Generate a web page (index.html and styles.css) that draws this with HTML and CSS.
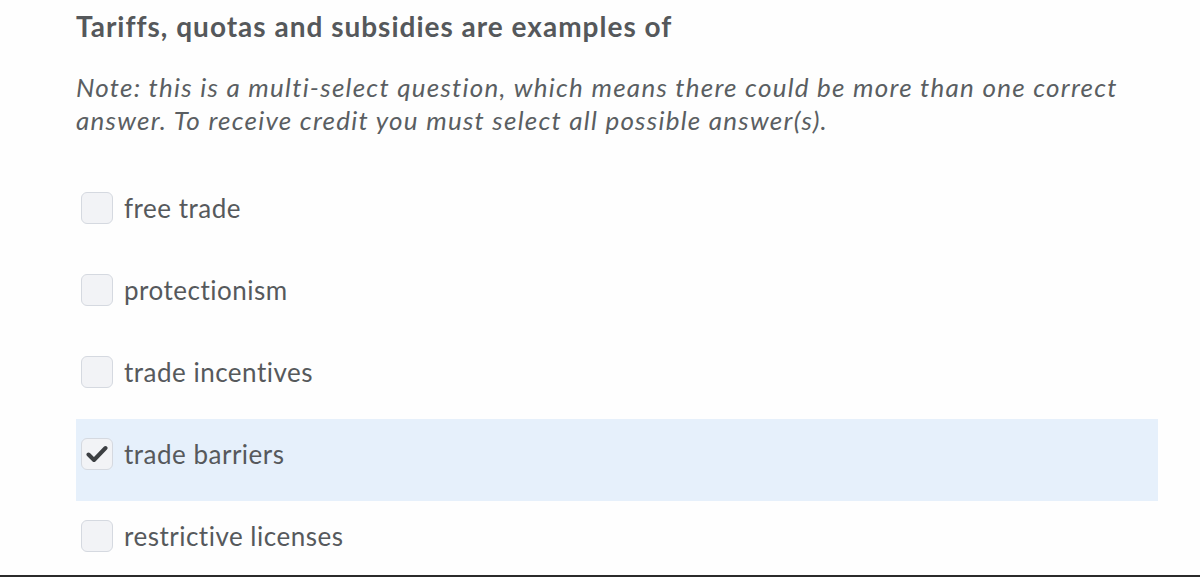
FILE: index.html
```html
<!DOCTYPE html>
<html>
<head>
<meta charset="utf-8">
<link rel="stylesheet" href="styles.css">
</head>
<body>
<div class="page">
  <h1 class="title">Tariffs, quotas and subsidies are examples of</h1>
  <p class="note">Note: this is a multi-select question, which means there could be more than one correct answer. To receive credit you must select all possible answer(s).</p>
  <div class="options">
    <label class="option"><span class="box"></span><span class="label">free trade</span></label>
    <label class="option"><span class="box"></span><span class="label">protectionism</span></label>
    <label class="option"><span class="box"></span><span class="label">trade incentives</span></label>
    <label class="option selected"><span class="box"><svg width="22" height="18" viewBox="0 0 22 18"><path d="M2.5 9.5 L8 15 L19.5 3" fill="none" stroke="#3c3f42" stroke-width="4" stroke-linecap="round" stroke-linejoin="round"/></svg></span><span class="label">trade barriers</span></label>
    <label class="option"><span class="box"></span><span class="label">restrictive licenses</span></label>
  </div>
</div>
<div class="bottom-line"></div>
</body>
</html>
```
FILE: styles.css
```css
html, body {
  margin: 0;
  padding: 0;
  background: #fefefe;
}
body {
  font-family: Lato, "Open Sans", sans-serif;
  color: #56595c;
  height: 577px;
  overflow: hidden;
  position: relative;
}
.page {
  padding: 0 42px 0 76px;
}
.title {
  margin: 0;
  padding-top: 6px;
  font-size: 28px;
  line-height: 40px;
  font-weight: 700;
  letter-spacing: 1px;
  color: #55585b;
}
.note {
  margin: 25px 0 0 0;
  font-size: 26px;
  line-height: 33px;
  font-style: italic;
  letter-spacing: 1.25px;
  color: #5a5e62;
}
.options {
  margin-top: 36px;
  display: flex;
  flex-direction: column;
}
.option {
  display: flex;
  align-items: flex-start;
  height: 82px;
  box-sizing: border-box;
  padding: 19px 0 0 5px;
  gap: 11px;
}
.option.selected {
  background: #e6f0fb;
}
.box {
  width: 32px;
  height: 32px;
  box-sizing: border-box;
  border: 1.5px solid #d5d9e0;
  border-radius: 6px;
  background: #f2f3f6;
  display: flex;
  align-items: center;
  justify-content: center;
  flex: none;
}
.label {
  font-size: 26px;
  line-height: 32px;
  letter-spacing: 0.5px;
  color: #56595c;
}
.bottom-line {
  position: absolute;
  left: 0;
  right: 0;
  bottom: 0;
  height: 2px;
  background: #2b2b2b;
}
```
